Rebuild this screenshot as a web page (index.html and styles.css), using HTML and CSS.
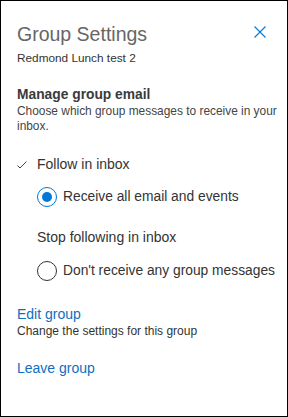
FILE: index.html
```html
<!DOCTYPE html>
<html>
	<head>
		<meta charset="utf-8" />
		<meta name="viewport" content="width=device-width, initial-scale=1">
		<title>Group Settings</title>
		<link rel="stylesheet" href="styles.css">
	</head>
	<body>
		<div class="panel">
			<div class="header">
				<div class="title">Group Settings</div>
				<a href="#" class="close">
					<svg width="12" height="12" viewBox="0 0 12 12"><path d="M0.5 0.5L11.5 11.5M11.5 0.5L0.5 11.5" stroke="#0078d4" stroke-width="1.1" fill="none"/></svg>
				</a>
			</div>
			<div class="sub">Redmond Lunch test 2</div>

			<div class="section">
				<div class="heading">Manage group email</div>
				<div class="desc">Choose which group messages to receive in your inbox.</div>
			</div>

			<div class="option-head">
				<span class="check">
					<svg width="10" height="8" viewBox="0 0 10 8"><path d="M0.5 4.5L3 7L9.5 0.5" stroke="#444" stroke-width="1" fill="none"/></svg>
				</span>
				Follow in inbox
			</div>
			<label class="radio">
				<span class="dot on"></span>
				Receive all email and events
			</label>

			<div class="option-head plain">Stop following in inbox</div>
			<label class="radio">
				<span class="dot"></span>
				Don't receive any group messages
			</label>

			<div class="link-block">
				<a href="#" class="link">Edit group</a>
				<div class="note">Change the settings for this group</div>
			</div>
			<div class="link-block">
				<a href="#" class="link">Leave group</a>
			</div>
		</div>
	</body>
</html>
```

FILE: styles.css
```css
* {
	padding: 0;
	margin: 0;
	text-decoration: none;
	box-sizing: border-box;
}

body {
	font-family: "Liberation Sans", Arial, sans-serif;
	color: #333;
	background-color: #fff;
}

.panel {
	width: 288px;
	height: 417px;
	border: 1px solid #000;
	padding: 0 6px 0 16px;
}

.header {
	display: flex;
	justify-content: space-between;
	align-items: center;
	padding-top: 19px;
}

.title {
	font-size: 19.5px;
	color: #666;
	line-height: 28px;
}

.close {
	display: block;
	margin-right: 15px;
	margin-bottom: 4px;
	line-height: 0;
}

.sub {
	font-size: 11.8px;
	line-height: 16px;
	margin-top: 2px;
}

.section {
	margin-top: 20px;
}

.heading {
	font-size: 13.8px;
	font-weight: bold;
	line-height: 18px;
	color: #3a3a3a;
}

.desc {
	font-size: 11.9px;
	line-height: 15px;
	color: #444;
}

.option-head {
	display: flex;
	align-items: center;
	font-size: 14px;
	line-height: 18px;
	margin-top: 21px;
}

.option-head.plain {
	padding-left: 20px;
}

.check {
	width: 20px;
	line-height: 0;
	padding-top: 1px;
}

.radio {
	display: flex;
	align-items: center;
	font-size: 13.8px;
	line-height: 20px;
	padding-left: 20px;
	margin-top: 14px;
	white-space: nowrap;
}

.option-head.plain + .radio {
	margin-top: 15px;
}

.dot {
	width: 20px;
	height: 20px;
	border-radius: 50%;
	border: 1px solid #333;
	margin-right: 6px;
	position: relative;
	flex-shrink: 0;
}

.dot.on {
	border: 1.5px solid #0078d4;
}

.dot.on::after {
	content: "";
	position: absolute;
	top: 3.5px;
	left: 3.5px;
	width: 10px;
	height: 10px;
	border-radius: 50%;
	background-color: #0078d4;
}

.link-block {
	margin-top: 24px;
}

.link-block + .link-block {
	margin-top: 20px;
}

.link {
	display: block;
	font-size: 14px;
	line-height: 18px;
	color: #106ebe;
}

.note {
	font-size: 12px;
	line-height: 16px;
}
```
